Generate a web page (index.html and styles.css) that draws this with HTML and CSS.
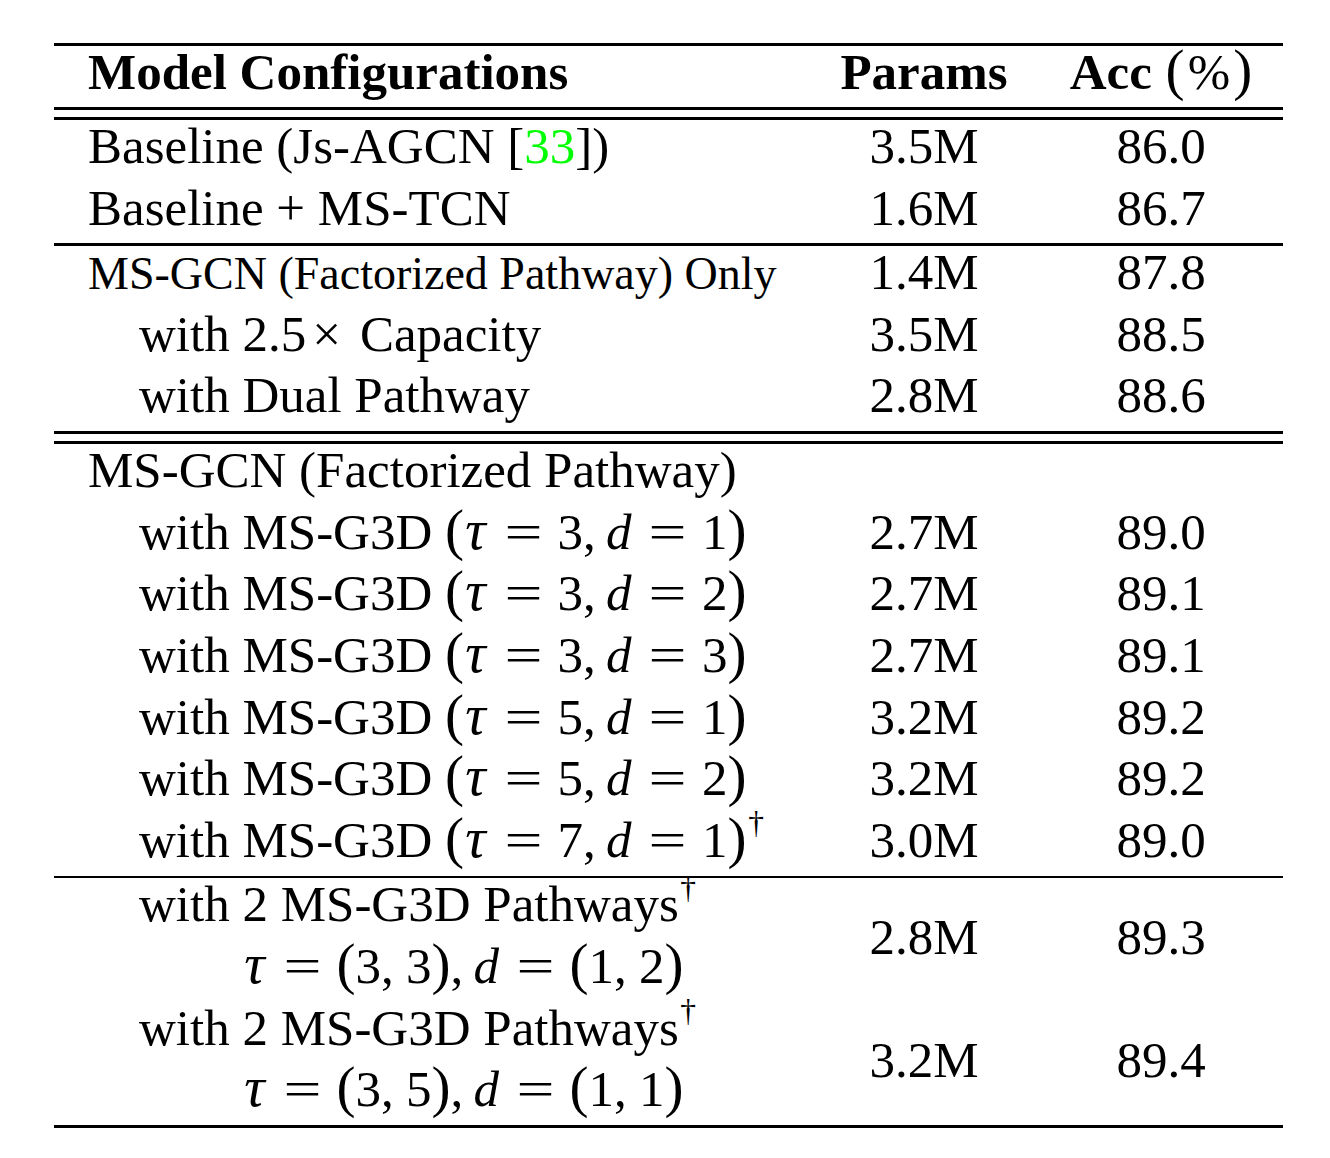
FILE: index.html
```html
<!DOCTYPE html>
<html>
<head>
<meta charset="utf-8">
<link rel="stylesheet" href="styles.css">
</head>
<body>
<div class="tbl">
  <div class="rule"></div>
  <div class="row head">
    <div class="c1">Model Configurations</div>
    <div class="c2">Params</div>
    <div class="c3">Acc <span class="pct"><span class="mp">(</span><span class="pc">%</span><span class="mp">)</span></span></div>
  </div>
  <div class="rule"></div><div class="gap"></div><div class="rule"></div>

  <div class="row"><div class="c1">Baseline (Js-AGCN [<span class="cite">33</span>])</div><div class="c2">3.5M</div><div class="c3">86.0</div></div>
  <div class="row"><div class="c1">Baseline + MS-TCN</div><div class="c2">1.6M</div><div class="c3">86.7</div></div>
  <div class="rule"></div>

  <div class="row"><div class="c1"><span class="small">MS-GCN (Factorized Pathway) Only</span></div><div class="c2">1.4M</div><div class="c3">87.8</div></div>
  <div class="row"><div class="c1 ind">with 2.5<span class="times">×</span> Capacity</div><div class="c2">3.5M</div><div class="c3">88.5</div></div>
  <div class="row"><div class="c1 ind">with Dual Pathway</div><div class="c2">2.8M</div><div class="c3">88.6</div></div>
  <div class="rule"></div><div class="gap"></div><div class="rule"></div>

  <div class="row"><div class="c1">MS-GCN (Factorized Pathway)</div><div class="c2"></div><div class="c3"></div></div>
  <div class="row"><div class="c1 ind">with MS-G3D <span class="mp">(</span><i class="tau">τ</i><span class="eq">=</span>3,<i class="d">d</i><span class="eq">=</span>1<span class="mp">)</span></div><div class="c2">2.7M</div><div class="c3">89.0</div></div>
  <div class="row"><div class="c1 ind">with MS-G3D <span class="mp">(</span><i class="tau">τ</i><span class="eq">=</span>3,<i class="d">d</i><span class="eq">=</span>2<span class="mp">)</span></div><div class="c2">2.7M</div><div class="c3">89.1</div></div>
  <div class="row"><div class="c1 ind">with MS-G3D <span class="mp">(</span><i class="tau">τ</i><span class="eq">=</span>3,<i class="d">d</i><span class="eq">=</span>3<span class="mp">)</span></div><div class="c2">2.7M</div><div class="c3">89.1</div></div>
  <div class="row"><div class="c1 ind">with MS-G3D <span class="mp">(</span><i class="tau">τ</i><span class="eq">=</span>5,<i class="d">d</i><span class="eq">=</span>1<span class="mp">)</span></div><div class="c2">3.2M</div><div class="c3">89.2</div></div>
  <div class="row"><div class="c1 ind">with MS-G3D <span class="mp">(</span><i class="tau">τ</i><span class="eq">=</span>5,<i class="d">d</i><span class="eq">=</span>2<span class="mp">)</span></div><div class="c2">3.2M</div><div class="c3">89.2</div></div>
  <div class="row"><div class="c1 ind">with MS-G3D <span class="mp">(</span><i class="tau">τ</i><span class="eq">=</span>7,<i class="d">d</i><span class="eq">=</span>1<span class="mp">)</span><sup class="dag">†</sup></div><div class="c2">3.0M</div><div class="c3">89.0</div></div>
  <div class="rule"></div>

  <div class="group">
    <div class="c1">
      <div class="line ind">with 2 MS-G3D Pathways<sup class="dag">†</sup></div>
      <div class="line ind2"><i class="tau">τ</i><span class="eq">=</span><span class="mp">(</span>3,<span class="th"></span>3<span class="mp">)</span>,<i class="d">d</i><span class="eq">=</span><span class="mp">(</span>1,<span class="th"></span>2<span class="mp">)</span></div>
    </div>
    <div class="c2 mid"><span>2.8M</span></div>
    <div class="c3 mid"><span>89.3</span></div>
  </div>
  <div class="group">
    <div class="c1">
      <div class="line ind">with 2 MS-G3D Pathways<sup class="dag">†</sup></div>
      <div class="line ind2"><i class="tau">τ</i><span class="eq">=</span><span class="mp">(</span>3,<span class="th"></span>5<span class="mp">)</span>,<i class="d">d</i><span class="eq">=</span><span class="mp">(</span>1,<span class="th"></span>1<span class="mp">)</span></div>
    </div>
    <div class="c2 mid"><span>3.2M</span></div>
    <div class="c3 mid"><span>89.4</span></div>
  </div>
  <div class="rule"></div>
</div>
</body>
</html>
```

FILE: styles.css
```css
html, body {
  margin: 0;
  padding: 0;
  background: #fff;
}

body {
  font-family: "Liberation Serif", "Times New Roman", serif;
  font-size: 51px;
  color: #000;
}

.tbl {
  width: 1229px;
  margin: 43px 0 0 54px;
}

.rule {
  height: 2.7px;
  background: #000;
}

.gap {
  height: 7.3px;
}

.row,
.group {
  display: grid;
  grid-template-columns: 750px 240px 234px;
  line-height: 52.4px;
  white-space: nowrap;
}

.row {
  height: 61.7px;
}

.group {
  height: 123.4px;
}

.head {
  font-weight: bold;
}

.c1 {
  padding-left: 34px;
}

.c2,
.c3 {
  text-align: center;
}

.small {
  font-size: 46px;
}

.ind {
  padding-left: 85px;
}

.line {
  height: 61.7px;
}

.line.ind {
  padding-left: 51px;
}

.line.ind2 {
  padding-left: 155px;
}

.mid {
  display: flex;
  align-items: center;
  justify-content: center;
  line-height: 62px;
  padding-bottom: 6px;
}

.cite {
  color: #00ff00;
}

.pct {
  font-weight: normal;
  margin-left: 0.02em;
}

.pc {
  margin: 0 0.06em;
}

.times {
  margin: 0 0.12em;
}

.mp {
  font-size: 1.12em;
  line-height: 0;
}

.tau,
.d {
  font-style: italic;
}

.tau {
  font-size: 1.12em;
  line-height: 0;
  margin-left: 0.02em;
  margin-right: 0.06em;
}

.eq {
  display: inline-block;
  transform: scaleX(1.32);
  margin: 0 0.39em;
}

.d {
  margin-left: 0.2em;
  margin-right: 0.04em;
}

.th {
  display: inline-block;
  width: 0.24em;
}

.dag {
  font-size: 0.62em;
  line-height: 0;
  vertical-align: 0.75em;
  margin-left: 0.05em;
}
```
